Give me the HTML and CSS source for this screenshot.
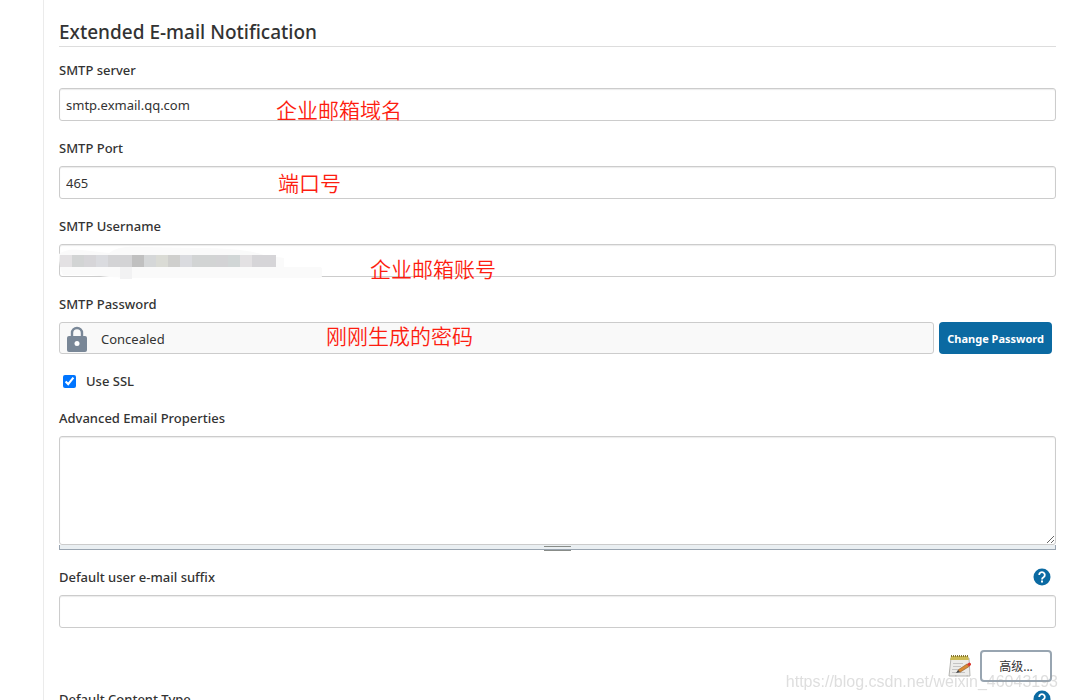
FILE: index.html
```html
<!DOCTYPE html>
<html lang="en">
<head>
    <meta charset="UTF-8">
    <meta name="viewport" content="width=device-width, initial-scale=1.0">
    <title>Configure System</title>
    <link rel="stylesheet" href="styles.css">
</head>
<body>

<main class="main-panel">
    <form class="config-form">
        <h1 class="section-header">Extended E-mail Notification</h1>

        <div class="field">
            <label for="smtpServer">SMTP server</label>
            <div class="control">
                <input class="text-input" type="text" id="smtpServer" value="smtp.exmail.qq.com">
                <span class="note note-server">企业邮箱域名</span>
            </div>
        </div>

        <div class="field">
            <label for="smtpPort">SMTP Port</label>
            <div class="control">
                <input class="text-input" type="text" id="smtpPort" value="465">
                <span class="note note-port">端口号</span>
            </div>
        </div>

        <div class="field">
            <label for="smtpUsername">SMTP Username</label>
            <div class="control">
                <input class="text-input" type="text" id="smtpUsername">
                <!-- Blurred out account name -->
                <svg class="mosaic" width="268" height="36" viewBox="0 0 268 36" aria-hidden="true">
                    <path fill="#fafafa" d="M0 10Q8 4 22 6L50 9Q60 1 85 3L140 4Q185 4 205 11L225 14V23H261Q263 23 263 25V32Q263 34 261 34H77L50 33L32 31H4Q0 24 0 10Z"/>
                    <path fill="#f2f2f3" d="M61 23h12v12H61z"/>
                    <path fill="#e3e1e3" d="M1 11h12v12H1zM181 11h12v12h-12z"/>
                    <path fill="#d2d4d4" d="M13 11h12v12H13zM133 11h24v12h-24z"/>
                    <path fill="#d6d5d8" d="M25 11h24v12H25zM193 11h24v12h-24z"/>
                    <path fill="#dadbdf" d="M37 11h12v12H37zM121 11h12v12h-12z"/>
                    <path fill="#d3d3d5" d="M49 11h24v12H49zM157 11h12v12h-12z"/>
                    <path fill="#c0c0c0" d="M73 11h12v12H73z"/>
                    <path fill="#d5d7d8" d="M85 11h12v12H85z"/>
                    <path fill="#dadbd5" d="M97 11h12v12H97z"/>
                    <path fill="#cfcfcd" d="M109 11h12v12h-12z"/>
                    <path fill="#d1d6d6" d="M169 11h12v12h-12z"/>
                </svg>
                <span class="note note-username">企业邮箱账号</span>
            </div>
        </div>

        <div class="field">
            <div class="field-label">SMTP Password</div>
            <div class="control password-row">
                <div class="concealed">
                    <svg width="20" height="26" viewBox="0 0 20 26" aria-hidden="true">
                        <path fill="none" stroke="#798797" stroke-width="2.400" d="M5 11V7a5 5 0 0 1 10 0v4"/>
                        <rect x="0" y="10" width="20" height="16" rx="2" fill="#798797"/>
                        <circle cx="10" cy="17.500" r="2.500" fill="#fff"/>
                    </svg>
                    <span>Concealed</span>
                </div>
                <button type="button" class="btn-primary">Change Password</button>
                <span class="note note-password">刚刚生成的密码</span>
            </div>
        </div>

        <div class="field check-row">
            <input type="checkbox" id="useSsl" checked>
            <label for="useSsl">Use SSL</label>
        </div>

        <div class="field">
            <label for="advancedProps">Advanced Email Properties</label>
            <div class="control">
                <textarea id="advancedProps"></textarea>
                <div class="resize-handle"></div>
            </div>
        </div>

        <div class="field suffix-field">
            <div class="label-row">
                <label for="userSuffix">Default user e-mail suffix</label>
                <button type="button" class="help" aria-label="Help">
                    <svg width="18" height="18" viewBox="0 0 18 18" aria-hidden="true">
                        <circle cx="9" cy="9" r="8.500" fill="#0b6aa2"/>
                        <path fill="none" stroke="#fff" stroke-width="1.800" d="M6.200 7a2.800 2.800 0 1 1 4.300 2.300Q9 10.200 9 11.500"/>
                        <path fill="#fff" d="M8 12.500h2v2H8z"/>
                    </svg>
                </button>
            </div>
            <div class="control">
                <input class="text-input" type="text" id="userSuffix">
            </div>
        </div>

        <div class="advanced-row">
            <svg width="24" height="24" viewBox="0 0 24 24" aria-hidden="true">
                <path fill="#ececea" stroke="#b4b4b1" d="M3 4h18l1 18H1z"/>
                <path fill="#cdbb55" d="M3 2h17l1 4H2z"/>
                <path stroke="#857631" stroke-width="2" stroke-dasharray="1 1" d="M3 2h17"/>
                <path fill="none" stroke="#c4c4c4" d="M5 9.500h10M5 12.500h8M4 15.500h6M4 18.500h13"/>
                <path fill="#d98b35" stroke="#8a5520" stroke-width=".6" d="M10 16L19 10l2 2.600L12 18.200z"/>
                <path fill="#d9362c" d="M19 10l2.500-1.500q2 .5 1.500 2.500L21 12.600z"/>
                <path fill="#444" d="M8 19l2-3 2 2.200z"/>
            </svg>
            <button type="button" class="btn-outline">高级...</button>
        </div>

        <div class="field">
            <div class="label-row">
                <div class="field-label">Default Content Type</div>
                <button type="button" class="help" aria-label="Help">
                    <svg width="18" height="18" viewBox="0 0 18 18" aria-hidden="true">
                        <circle cx="9" cy="9" r="8.500" fill="#0b6aa2"/>
                        <path fill="none" stroke="#fff" stroke-width="1.800" d="M6.200 7a2.800 2.800 0 1 1 4.300 2.300Q9 10.200 9 11.500"/>
                        <path fill="#fff" d="M8 12.500h2v2H8z"/>
                    </svg>
                </button>
            </div>
        </div>
    </form>
</main>

<div class="watermark">https://blog.csdn.net/weixin_46043193</div>

</body>
</html>
```

FILE: styles.css
```css
* {
    box-sizing: border-box;
}

body {
    margin: 0;
    height: 100vh;
    overflow: hidden;
    background-color: #fff;
    color: #333;
    font-family: "Noto Sans", "Noto Sans CJK SC", sans-serif;
    font-size: 13px;
    line-height: 20px;
}

.main-panel {
    min-height: 100vh;
    margin-left: 43px;
    padding: 19px 11px 0 15px;
    border-left: 1px solid #ebebeb;
}

.section-header {
    margin: 0 0 13px;
    border-bottom: 1px solid #ddd;
    font-size: 19px;
    font-weight: 500;
    line-height: 27px;
}

.field {
    margin-bottom: 17px;
}

.field label,
.field-label {
    display: block;
    font-weight: 500;
}

.control {
    position: relative;
    margin-top: 8px;
}

.text-input,
textarea {
    display: block;
    width: 100%;
    border: 1px solid #ccc;
    border-radius: 3px;
    background-color: #fff;
    box-shadow: inset 0 1px 1px rgba(0, 0, 0, 0.08);
    color: #333;
    font: inherit;
}

.text-input {
    height: 33px;
    padding: 0 6px;
}

textarea {
    height: 109px;
    padding: 6px;
    resize: vertical;
}

.resize-handle {
    height: 5px;
    padding-top: 1px;
    border: 1px solid #9aa5b1;
    border-top: 0;
    background-color: #eaeff2;
}

/* grip lines in the middle of the handle */
.resize-handle::before {
    content: "";
    display: block;
    width: 27px;
    height: 3px;
    margin: 0 auto;
    border: 1px solid #888c88;
    border-width: 1px 0;
}

/* Red annotations over the fields */
.note {
    position: absolute;
    color: #fd1d10;
    font-family: "Noto Sans CJK SC", sans-serif;
    font-size: 21px;
    font-weight: 350;
    line-height: 30px;
    white-space: nowrap;
    pointer-events: none;
}

.note-server {
    top: 6px;
    left: 217px;
}

.note-port {
    top: 1px;
    left: 219px;
}

.note-username {
    top: 9px;
    left: 311px;
}

.note-password {
    top: -2px;
    left: 267px;
}

.mosaic {
    position: absolute;
    top: 0;
    left: 0;
}

.password-row {
    display: flex;
    gap: 5px;
    padding-right: 4px;
}

.concealed {
    display: flex;
    flex: 1;
    align-items: center;
    gap: 14px;
    height: 32px;
    padding: 1px 7px 0;
    border: 1px solid #ccc;
    border-radius: 3px;
    background-color: #f9f9f9;
}

.btn-primary {
    height: 32px;
    padding: 1px 8px 0;
    border: 0;
    border-radius: 4px;
    background-color: #0b6aa2;
    color: #fff;
    font: inherit;
    font-size: 11px;
    font-weight: 700;
}

.check-row {
    display: flex;
    align-items: center;
    gap: 10px;
    padding-left: 4px;
}

.check-row input {
    width: 13px;
    height: 13px;
    margin: 0;
    accent-color: #0075ff;
}

.label-row {
    display: flex;
    align-items: center;
    justify-content: space-between;
    height: 20px;
    padding-right: 5px;
}

.help {
    display: flex;
    padding: 0;
    border: 0;
    background: none;
}

.suffix-field {
    margin-bottom: 22px;
}

.advanced-row {
    display: flex;
    align-items: center;
    justify-content: flex-end;
    gap: 8px;
    margin-bottom: 7px;
    padding-right: 4px;
}

.btn-outline {
    width: 72px;
    height: 32px;
    padding: 1px 0 0;
    border: 2px solid #98a5b1;
    border-radius: 4px;
    background-color: #fff;
    color: #333;
    font: inherit;
    font-size: 12px;
}

.watermark {
    position: fixed;
    right: 9px;
    bottom: 8px;
    color: rgba(160, 160, 160, 0.35);
    font-family: "Liberation Sans", Arial, sans-serif;
    font-size: 16px;
    line-height: 20px;
    pointer-events: none;
}
```
